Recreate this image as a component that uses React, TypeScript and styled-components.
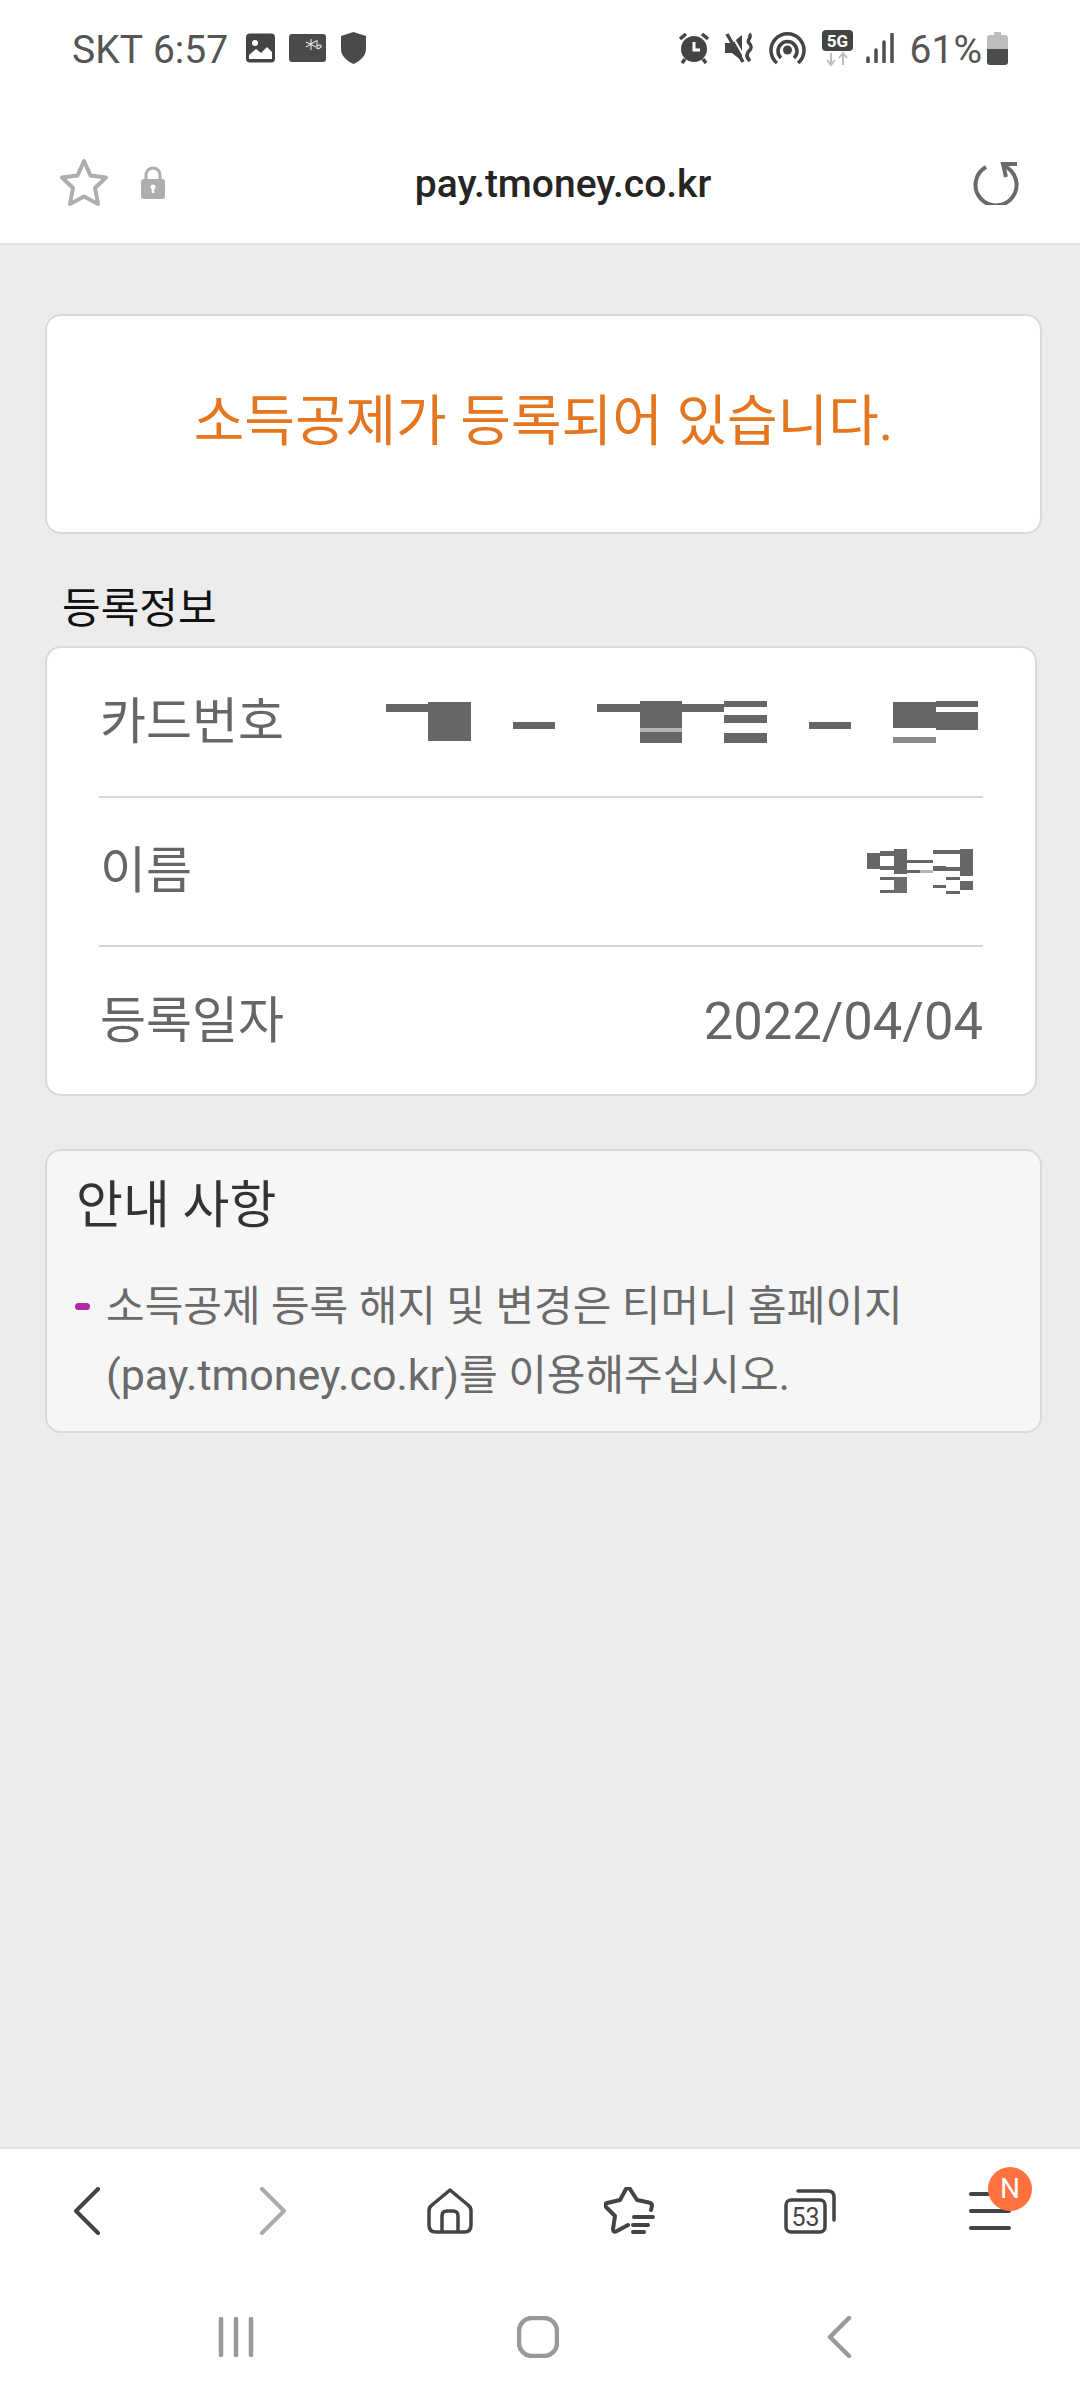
import React from 'react';
import styled, { createGlobalStyle } from 'styled-components';

const GlobalStyle = createGlobalStyle`
  html, body {
    margin: 0;
    padding: 0;
    background: #ececec;
  }

  * {
    box-sizing: border-box;
  }
`;

const FONT = `Roboto, "Noto Sans CJK KR", "Noto Sans", sans-serif`;

const Screen = styled.div`
  width: 1080px;
  height: 2400px;
  display: flex;
  flex-direction: column;
  overflow: hidden;
  font-family: ${FONT};
  background: #ececec;
`;

const StatusBar = styled.div`
  height: 130px;
  flex: none;
  padding: 16px 72px 0;
  background: #fff;
  display: flex;
  justify-content: space-between;
  align-items: flex-start;
`;

const StatusGroup = styled.div`
  height: 64px;
  display: flex;
  align-items: center;
`;

const StatusText = styled.span<{ $ml?: number }>`
  margin-left: ${(p) => p.$ml ?? 0}px;
  padding-top: 3px;
  font-size: 39px;
  line-height: 64px;
  color: #555;
  white-space: nowrap;
`;

const StatusIcon = styled.svg<{ $ml?: number }>`
  display: block;
  flex: none;
  margin-left: ${(p) => p.$ml ?? 0}px;
`;

const AddressBar = styled.div`
  height: 115px;
  flex: none;
  padding: 0 61px 8px 59px;
  background: #fff;
  border-bottom: 2px solid #e2e2e2;
  display: flex;
  align-items: center;
`;

const LockIcon = styled.svg`
  display: block;
  margin-left: 32px;
`;

const Url = styled.div`
  flex: 1;
  padding: 2px 12px 0 0;
  text-align: center;
  font-size: 39px;
  font-weight: 500;
  color: #252525;
`;

const Main = styled.main`
  flex: 1;
  padding: 69px 38px 0 45px;
`;

const Notice = styled.div`
  height: 220px;
  display: flex;
  align-items: center;
  justify-content: center;
  background: #fff;
  border: 2px solid #d9d9d9;
  border-radius: 16px;
  color: #e5761f;
  font-size: 55px;
  padding-bottom: 16px;
`;

const SectionLabel = styled.div`
  height: 112px;
  padding: 28px 0 0 17px;
  display: flex;
  align-items: center;
  font-size: 42px;
  color: #111;
`;

const InfoCard = styled.div`
  margin-right: 5px;
  background: #fff;
  border: 2px solid #d9d9d9;
  border-radius: 16px;
`;

const Row = styled.div`
  height: 149.5px;
  margin: 0 52px;
  display: flex;
  justify-content: space-between;
  align-items: center;
  border-bottom: 2px solid #d6d6d6;
  color: #666;

  &:last-child {
    height: 147px;
    border-bottom: none;
  }
`;

const RowLabel = styled.span`
  padding: 0 0 10px 1px;
  font-size: 50px;
`;

const RowValue = styled.span`
  font-size: 52.5px;
`;

const Redacted = styled.svg<{ $mr: number }>`
  display: block;
  margin-right: ${(p) => p.$mr}px;
`;

const Guide = styled.section`
  margin-top: 53px;
  padding: 24px 30px 21px 29px;
  background: #f6f6f6;
  border: 2px solid #d9d9d9;
  border-radius: 16px;
`;

const GuideTitle = styled.h2`
  margin: 0;
  font-size: 51px;
  line-height: 62px;
  font-weight: 400;
  color: #333;
`;

const GuideItem = styled.div`
  margin-top: 35px;
  display: flex;
  gap: 16px;
  font-size: 42px;
  line-height: 69px;
  color: #6a6a6a;
`;

const Latin = styled.span`
  font-size: 43px;
`;

const Bullet = styled.span`
  flex: none;
  width: 15px;
  height: 7px;
  margin: 31px 0 0 -1px;
  border-radius: 4px;
  background: #b02aa8;
`;

const Toolbar = styled.nav`
  height: 126px;
  flex: none;
  display: grid;
  grid-template-columns: repeat(6, 180px);
  align-items: center;
  justify-items: center;
  background: #fff;
  border-top: 2px solid #e2e2e2;
`;

const ToolButton = styled.div<{ $dx?: number }>`
  position: relative;
  display: flex;
  margin-left: ${(p) => (p.$dx ?? 0) * 2}px;
`;

const Badge = styled.span`
  position: absolute;
  top: -25px;
  right: -21px;
  width: 44px;
  height: 44px;
  border-radius: 50%;
  background: #ff7240;
  color: #fff;
  font-size: 28px;
  line-height: 44px;
  text-align: center;
`;

const SystemNav = styled.div`
  flex: none;
  height: 127px;
  padding-right: 5px;
  display: grid;
  grid-template-columns: repeat(3, 302px);
  justify-content: center;
  align-items: center;
  justify-items: center;
  background: #fff;
`;

type Block = [number, number, number, number, string?];

const CARD_BLOCKS: Block[] = [
  [385, 704, 42, 8],
  [427, 702, 43, 39],
  [512, 722, 42, 7],
  [596, 704, 127, 8],
  [639, 701, 42, 27],
  [639, 728, 42, 4, '#b5b5b5'],
  [639, 732, 42, 11],
  [723, 701, 43, 6],
  [723, 715, 43, 8],
  [723, 733, 43, 10],
  [808, 722, 42, 7],
  [892, 702, 43, 26],
  [892, 737, 43, 6, '#8a8a8a'],
  [935, 701, 42, 6],
  [935, 712, 42, 18],
];

const NAME_BLOCKS: Block[] = [
  [866, 853, 13, 16],
  [879, 851, 14, 5],
  [879, 866, 14, 4],
  [893, 849, 13, 25],
  [879, 877, 14, 3],
  [893, 877, 13, 16, '#6e6e6e'],
  [879, 890, 14, 3],
  [906, 860, 26, 3],
  [906, 870, 13, 3],
  [919, 870, 13, 3, '#b5b5b5'],
  [932, 850, 27, 4],
  [932, 866, 13, 5],
  [945, 867, 14, 4],
  [959, 849, 13, 27],
  [945, 877, 14, 3],
  [932, 885, 13, 3],
  [959, 881, 13, 9],
  [945, 891, 14, 3],
];

const Blocks = ({ items }: { items: Block[] }) => (
  <>
    {items.map(([x, y, w, h, fill], i) => (
      <rect key={i} x={x} y={y} width={w} height={h} fill={fill ?? '#666'} />
    ))}
  </>
);

const App: React.FC = () => {
  return (
    <Screen>
      <GlobalStyle />
      <StatusBar>
        <StatusGroup>
          <StatusText>SKT</StatusText>
          <StatusText $ml={10}>6:57</StatusText>
          <StatusIcon $ml={18} width="29" height="30" viewBox="0 0 29 30">
            <rect y="0.5" width="29" height="29" rx="4" fill="#444" />
            <circle cx="9" cy="10" r="3" fill="#fff" />
            <path d="M3 26v-4l7-6 5 4 6-6 5 5v7z" fill="#fff" />
          </StatusIcon>
          <StatusIcon $ml={14} width="37" height="28" viewBox="0 0 37 28">
            <rect width="37" height="28" rx="3" fill="#4a4a4a" />
            <path d="M22 5v11M17 8l10 5M27 7l-10 6M28 6v9M28 12c3-2 5 0 4 1s-3 2-4 1" stroke="#ddd" strokeWidth="1.2" fill="none" />
          </StatusIcon>
          <StatusIcon $ml={15} width="25" height="32" viewBox="0 0 25 32">
            <path d="M12.5 0 25 4v13c0 7-6 12-12.500 15C6 29 0 24 0 17V4z" fill="#4a4a4a" />
          </StatusIcon>
        </StatusGroup>
        <StatusGroup>
          <StatusIcon width="30" height="32" viewBox="0 0 30 32">
            <circle cx="15" cy="17" r="13" fill="#444" />
            <path d="M15 10v8h6" stroke="#fff" strokeWidth="3" fill="none" />
            <path d="M1 7l6-5M29 7l-6-5M6 27l-3 4M24 27l3 4" stroke="#444" strokeWidth="3.500" />
          </StatusIcon>
          <StatusIcon $ml={16} width="29" height="32" viewBox="0 0 29 32">
            <path d="M0 11h7l10-8v26l-10-8H0z" fill="#444" />
            <path d="M5 0l16 28" stroke="#fff" strokeWidth="2" />
            <path d="M2 2l16 28" stroke="#444" strokeWidth="3.500" />
            <path d="M24 2c4 3-3 6 0 9s3 5 0 8-3 6 1 10" stroke="#444" strokeWidth="3.500" fill="none" />
          </StatusIcon>
          <StatusIcon $ml={15} width="37" height="34" viewBox="0 0 37 34">
            <circle cx="18.500" cy="19" r="4.500" fill="#444" />
            <path d="M8 32A16.500 16.500 0 1 1 29 32" stroke="#444" strokeWidth="3.500" fill="none" />
            <path d="M12 27A9.500 9.500 0 1 1 25 27" stroke="#444" strokeWidth="3.500" fill="none" />
          </StatusIcon>
          <StatusIcon $ml={16} width="31" height="36" viewBox="0 0 31 36">
            <rect width="31" height="21" rx="4" fill="#444" />
            <text x="15.500" y="17" textAnchor="middle" fontSize="17" fontWeight="700" fill="#fff" fontFamily="Roboto, sans-serif">5G</text>
            <path d="M9 23v12M5 30l4 5 4-5M21 35V23M17 28l4-5 4 5" stroke="#bdbdbd" strokeWidth="2" fill="none" />
          </StatusIcon>
          <StatusIcon $ml={13} width="28" height="30" viewBox="0 0 28 30">
            <path d="M2 25v4M10 17v12M18 9v20M26 1v28" stroke="#4d4d4d" strokeWidth="3.500" strokeLinecap="round" />
          </StatusIcon>
          <StatusText $ml={16}>61%</StatusText>
          <StatusIcon $ml={5} width="21" height="33" viewBox="0 0 21 33">
            <path d="M7 0h7v3h4q3 0 3 3v11H0V6q0-3 3-3h4z" fill="#bdbdbd" />
            <path d="M0 17h21v13q0 3-3 3H3q-3 0-3-3z" fill="#4d4d4d" />
          </StatusIcon>
        </StatusGroup>
      </StatusBar>

      <AddressBar>
        <svg width="50" height="50" viewBox="0 0 50 50">
          <path
            d="M25 3l6.500 14.500L47 19.500 36 30l3 16-14-7.500L11 46l3-16L3 19.500l15.500-2z"
            fill="none"
            stroke="#aeaeae"
            strokeWidth="4"
            strokeLinejoin="round"
          />
        </svg>
        <LockIcon width="24" height="33" viewBox="0 0 24 33">
          <path d="M5 14V9a7 7 0 0 1 14 0v5" fill="none" stroke="#aeaeae" strokeWidth="3" />
          <rect y="13" width="24" height="20" rx="3" fill="#aeaeae" />
          <circle cx="12" cy="21" r="2.500" fill="#fff" />
          <rect x="10.800" y="21" width="2.400" height="6" fill="#fff" />
        </LockIcon>
        <Url>pay.tmoney.co.kr</Url>
        <svg width="46" height="44" viewBox="0 0 46 44">
          <path d="M13 6A20.500 20.500 0 1 0 31 5" fill="none" stroke="#6a6a6a" strokeWidth="4" />
          <path d="M44 3H30l3 13" fill="none" stroke="#6a6a6a" strokeWidth="4" />
        </svg>
      </AddressBar>

      <Main>
        <Notice>소득공제가 등록되어 있습니다.</Notice>
        <SectionLabel>등록정보</SectionLabel>
        <InfoCard>
          <Row>
            <RowLabel>카드번호</RowLabel>
            <Redacted $mr={5} width="592" height="42" viewBox="385 701 592 42">
              <Blocks items={CARD_BLOCKS} />
            </Redacted>
          </Row>
          <Row>
            <RowLabel>이름</RowLabel>
            <Redacted $mr={10} width="106" height="45" viewBox="866 849 106 45">
              <Blocks items={NAME_BLOCKS} />
            </Redacted>
          </Row>
          <Row>
            <RowLabel>등록일자</RowLabel>
            <RowValue>2022/04/04</RowValue>
          </Row>
        </InfoCard>
        <Guide>
          <GuideTitle>안내 사항</GuideTitle>
          <GuideItem>
            <Bullet />
            <span>
              소득공제 등록 해지 및 변경은 티머니 홈페이지
              <br />
              <Latin>(pay.tmoney.co.kr)</Latin>를 이용해주십시오.
            </span>
          </GuideItem>
        </Guide>
      </Main>

      <Toolbar>
        <ToolButton $dx={-3}>
          <svg width="26" height="48" viewBox="0 0 26 48">
            <path d="M24 2 2 24l22 22" fill="none" stroke="#444" strokeWidth="4" strokeLinecap="round" strokeLinejoin="round" />
          </svg>
        </ToolButton>
        <ToolButton $dx={3}>
          <svg width="26" height="48" viewBox="0 0 26 48">
            <path d="M2 2l22 22L2 46" fill="none" stroke="#aaa" strokeWidth="4" strokeLinecap="round" strokeLinejoin="round" />
          </svg>
        </ToolButton>
        <ToolButton>
          <svg width="46" height="46" viewBox="0 0 46 46">
            <path d="M23 2 41 17q3 2 3 6v14q0 7-7 7H9q-7 0-7-7V23q0-4 3-6z" fill="none" stroke="#444" strokeWidth="3.500" strokeLinejoin="round" />
            <path d="M15 44V28q0-5 5-5h6q5 0 5 5v16" fill="none" stroke="#444" strokeWidth="3.500" />
          </svg>
        </ToolButton>
        <ToolButton>
          <svg width="52" height="48" viewBox="0 0 52 48">
            <path
              d="M47 23l1-4q0-3-3-3.500L33 13 26 2q-2-2-4 0l-6 11-13 3q-3 1-1 4l9 9-2 13q0 4 4 2l11-6"
              fill="none"
              stroke="#444"
              strokeWidth="4"
              strokeLinecap="round"
              strokeLinejoin="round"
            />
            <path d="M30 30h19M29 38h15M29 45h11" stroke="#444" strokeWidth="4" strokeLinecap="round" />
          </svg>
        </ToolButton>
        <ToolButton>
          <svg width="52" height="45" viewBox="0 0 52 45">
            <rect x="2" y="11" width="39" height="32" rx="5" fill="none" stroke="#444" strokeWidth="3.500" />
            <path d="M14 2h30q6 0 6 6v23" fill="none" stroke="#444" strokeWidth="3.500" strokeLinecap="round" />
            <text x="21.500" y="36.500" textAnchor="middle" fontSize="25" fill="#444" fontFamily="Roboto, sans-serif">53</text>
          </svg>
        </ToolButton>
        <ToolButton>
          <svg width="42" height="38" viewBox="0 0 42 38">
            <path d="M2 2h38M2 19h38M2 36h38" stroke="#444" strokeWidth="4" strokeLinecap="round" />
          </svg>
          <Badge>N</Badge>
        </ToolButton>
      </Toolbar>

      <SystemNav>
        <svg width="36" height="40" viewBox="0 0 36 40">
          <path d="M3 2v36M18 2v36M33 2v36" stroke="#999" strokeWidth="4.500" strokeLinecap="round" />
        </svg>
        <svg width="42" height="42" viewBox="0 0 42 42">
          <rect x="2" y="2" width="38" height="38" rx="13" fill="none" stroke="#999" strokeWidth="4.500" />
        </svg>
        <svg width="25" height="42" viewBox="0 0 25 42">
          <path d="M22 2 3 21l19 19" fill="none" stroke="#999" strokeWidth="4.500" strokeLinecap="round" strokeLinejoin="round" />
        </svg>
      </SystemNav>
    </Screen>
  );
};

export default App;
